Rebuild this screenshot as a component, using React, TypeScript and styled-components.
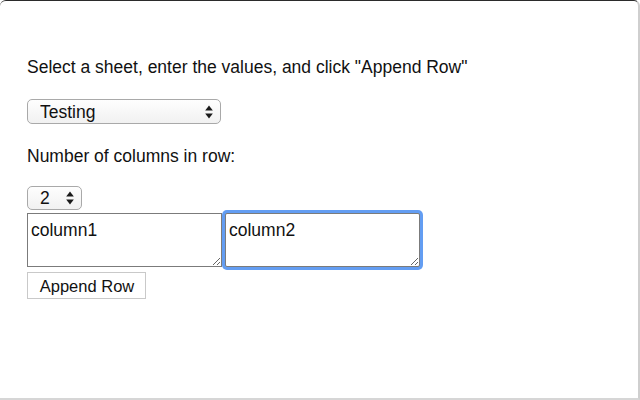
import React, { useState } from 'react';
import styled, { createGlobalStyle } from 'styled-components';

const text_dark = '#111111';
const border_grey = '#a9a9a9';
const focus_blue = 'rgba(72, 140, 240, 0.85)';

const GlobalStyle = createGlobalStyle`
  html, body {
    margin: 0;
    padding: 0;
    background: #ffffff;
  }
  body {
    font-family: "Liberation Sans", Arial, sans-serif;
    color: ${text_dark};
  }
`;

const SelectArrows = () => (
  <svg width='8' height='14' viewBox='0 0 8 14'>
    <path d='M4 0.5 L7.8 5.5 L0.2 5.5 Z' fill='#1a1a1a' />
    <path d='M4 13.5 L7.8 8.5 L0.2 8.5 Z' fill='#1a1a1a' />
  </svg>
);

const App = () => {
  const [sheet, setSheet] = useState('Testing');
  const [count, setCount] = useState('2');

  return (
    <>
      <GlobalStyle />
      <Window>
        <Content>
          <Prompt>Select a sheet, enter the values, and click "Append Row"</Prompt>
          <SelectBox $width={194} $height={25} $top={22}>
            <Select value={sheet} onChange={(e) => setSheet(e.target.value)}>
              <option>Testing</option>
              <option>Sheet1</option>
            </Select>
            <span className='arrows'>
              <SelectArrows />
            </span>
          </SelectBox>
          <Prompt $top={22}>Number of columns in row:</Prompt>
          <SelectBox $width={55} $height={24} $top={20}>
            <Select value={count} onChange={(e) => setCount(e.target.value)}>
              <option>1</option>
              <option>2</option>
              <option>3</option>
            </Select>
            <span className='arrows'>
              <SelectArrows />
            </span>
          </SelectBox>
          <Columns>
            <ColumnInput defaultValue='column1' />
            <ColumnInput defaultValue='column2' $focused />
          </Columns>
          <AppendButton>Append Row</AppendButton>
        </Content>
      </Window>
    </>
  );
};

export default App;

const Window = styled.div`
  position: relative;
  box-sizing: border-box;
  width: 640px;
  height: 400px;
  background: #ffffff;
  border-top: 1px solid #2b2b2b;
  border-right: 2px solid #cfcfcf;
  border-bottom: 2px solid #d6d6d6;
  border-radius: 6px 6px 0 0;
  overflow: hidden;
  &::after {
    content: '';
    position: absolute;
    top: 0;
    right: -2px;
    width: 2px;
    height: 64px;
    background: #2b2b2b;
  }
`;

const Content = styled.div`
  display: flex;
  flex-direction: column;
  align-items: flex-start;
  padding: 56px 0 0 27px;
`;

const Prompt = styled.p<{ $top?: number }>`
  margin: ${(p) => p.$top ?? 0}px 0 0;
  font-size: 17.5px;
  line-height: 20px;
`;

const SelectBox = styled.div<{ $width: number; $height: number; $top: number }>`
  position: relative;
  width: ${(p) => p.$width}px;
  height: ${(p) => p.$height}px;
  margin-top: ${(p) => p.$top}px;
  .arrows {
    position: absolute;
    right: 8px;
    top: 50%;
    transform: translateY(-50%);
    pointer-events: none;
    display: flex;
  }
`;

const Select = styled.select`
  appearance: none;
  -webkit-appearance: none;
  box-sizing: border-box;
  width: 100%;
  height: 100%;
  margin: 0;
  padding: 0 0 0 12px;
  border: 1px solid ${border_grey};
  border-radius: 5px;
  background: linear-gradient(#fefefe, #f1f1f1);
  font-family: "Liberation Sans", Arial, sans-serif;
  font-size: 17.5px;
  color: ${text_dark};
  outline: none;
`;

const Columns = styled.div`
  display: flex;
  gap: 3px;
  margin-top: 3px;
`;

const ColumnInput = styled.textarea<{ $focused?: boolean }>`
  box-sizing: border-box;
  width: 195px;
  height: 54px;
  margin: 0;
  padding: 6px 3px 3px;
  border: 1px solid #7b7b7b;
  border-radius: ${(p) => (p.$focused ? '2px' : '0')};
  font-family: "Liberation Sans", Arial, sans-serif;
  font-size: 17.5px;
  line-height: 20px;
  color: ${text_dark};
  background: #ffffff;
  outline: none;
  box-shadow: ${(p) => (p.$focused ? `0 0 0 3px ${focus_blue}` : 'none')};
  position: relative;
  z-index: ${(p) => (p.$focused ? 1 : 0)};
`;

const AppendButton = styled.button`
  box-sizing: border-box;
  margin-top: 5px;
  width: 119px;
  height: 27px;
  padding: 2px 0 0 1px;
  border: 1px solid #c9c9c9;
  background: #ffffff;
  font-family: "Liberation Sans", Arial, sans-serif;
  font-size: 16.5px;
  color: ${text_dark};
  cursor: pointer;
`;
